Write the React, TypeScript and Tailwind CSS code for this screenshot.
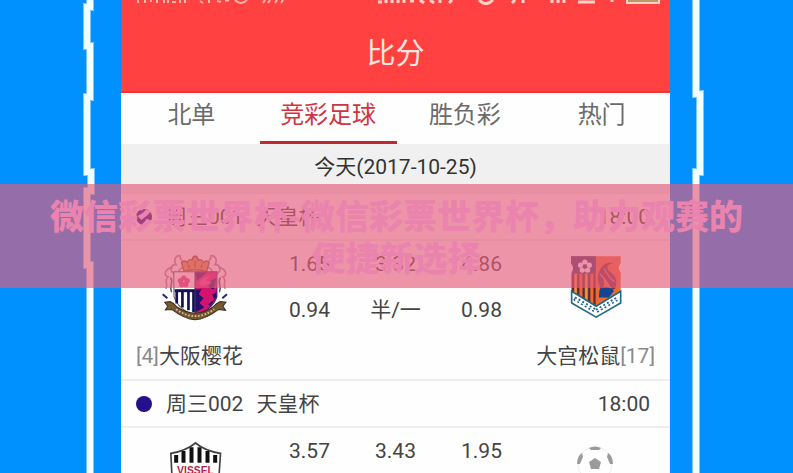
import React from "react";
import clsx from "clsx";

interface Team {
  name?: string;
  rank?: string;
  crest: React.ReactNode;
}

interface Match {
  code: string;
  league: string;
  time: string;
  odds: string[];
  handicap?: string[];
  home: Team;
  away: Team;
}

const SakuraCrest = () => (
  <svg viewBox="40 40 200 200" className="h-[67px] w-[67px]" aria-hidden="true">
    <g fill="none" stroke="#a98a96" strokeWidth="5" strokeLinecap="round">
      <path d="M76 100 C60 88 68 70 82 72 C72 56 84 42 94 46 C90 56 106 58 104 74 C104 84 92 80 90 92" />
      <path d="M204 100 C220 88 212 70 198 72 C208 56 196 42 186 46 C190 56 174 58 176 74 C176 84 188 80 190 92" />
      <path d="M70 80 C48 84 44 106 58 108 C44 120 60 132 52 142 M210 80 C232 84 236 106 222 108 C236 120 220 132 228 142" />
      <path d="M66 112 C76 124 60 134 68 152 M214 112 C204 124 220 134 212 152" stroke="#6d5a72" />
    </g>
    <path
      d="M106 92 L98 66 Q108 56 116 66 Q118 54 130 58 Q131 48 139 46 Q147 48 148 58 Q160 54 163 66 Q172 56 181 66 L173 92 Q140 82 106 92Z"
      fill="#d8953c"
      stroke="#8c5426"
      strokeWidth="4"
    />
    <path d="M118 72 L122 82 M139 60 V80 M160 72 L156 82" stroke="#8c5426" strokeWidth="4" />
    <path d="M75 93 H139 V222 Q90 208 76 168Z" fill="#fff" stroke="#555" strokeWidth="3" />
    <path d="M139 93 H204 V168 Q190 208 139 222Z" fill="#d3146f" stroke="#41246b" strokeWidth="3" />
    <g fill="#d8457f">
      <circle cx="105" cy="112" r="8" />
      <circle cx="95" cy="120" r="8" />
      <circle cx="115" cy="120" r="8" />
      <circle cx="99" cy="131" r="8" />
      <circle cx="111" cy="131" r="8" />
    </g>
    <path d="M78 145 H138 V154 H78Z" fill="#141450" />
    <path d="M84 150 V188 M101 150 V200 M119 150 V208 M134 150 V214" stroke="#141450" strokeWidth="8" />
    <path d="M140 95 H174 L144 120Z M202 112 L194 146 L178 138 L186 120Z M140 146 L158 144 L150 160 L164 172 L152 186 L166 200 L140 214Z M202 154 L190 162 L196 176 L178 190 L184 196 L203 168Z" fill="#24106d" />
    <path d="M150 126 Q166 102 184 106 L170 120 L190 126 L160 136Z" fill="#ee398e" />
    <path
      d="M48 184 L64 182 Q78 188 86 199 Q112 216 139 217 Q166 216 191 199 Q200 188 214 182 L231 184 L222 196 L230 208 L208 206 Q170 235 139 236 Q108 235 70 206 L50 207 L57 196Z"
      fill="#75582f"
      stroke="#3b2c25"
      strokeWidth="3"
    />
    <path d="M82 205 Q139 246 196 205" fill="none" stroke="#d9c38c" strokeWidth="5" strokeDasharray="5 5" />
    <path d="M42 160 L56 172 M234 160 L220 172" stroke="#29266f" strokeWidth="6" />
  </svg>
);

const SquirrelCrest = () => (
  <svg viewBox="70 42 160 192" className="h-[64px] w-[53px]" aria-hidden="true">
    <path d="M76 45 H226 V66 Q214 78 226 94 V186 L152 230 L77 186 V94 Q88 78 76 66Z" fill="#ed6b33" />
    <path d="M76 45 H151 V98 H78 Q88 80 76 66Z" fill="#3f3b70" />
    <path d="M82 98 V164 M98 98 V172 M114 98 V178 M131 98 V188 M147 98 V200" stroke="#5e2b3b" strokeWidth="7" />
    <path d="M90 98 V164 M122 98 V178" stroke="#e9a035" strokeWidth="5" />
    <path
      d="M160 128 C150 94 172 58 204 66 C184 68 180 82 194 92 C210 104 218 116 210 142 L190 154 C198 134 184 118 172 110 C178 128 178 142 166 150Z"
      fill="#73334a"
    />
    <path d="M176 82 Q192 112 208 122 M164 98 Q180 116 196 142" stroke="#e57550" strokeWidth="4" fill="none" />
    <path d="M162 146 Q184 128 206 150 L190 170 H160Z" fill="#12478f" />
    <g fill="#fff">
      <circle cx="118" cy="63" r="8" />
      <circle cx="105" cy="72" r="8" />
      <circle cx="131" cy="72" r="8" />
      <circle cx="110" cy="87" r="8" />
      <circle cx="126" cy="87" r="8" />
    </g>
    <circle cx="118" cy="76" r="7" fill="#4c4168" />
    <path d="M78 151 L152 196 L226 151 V186 L152 229 L78 186Z" fill="#fff" stroke="#216a83" strokeWidth="5" />
    <path d="M86 172 L152 211 L218 172" fill="none" stroke="#23678b" strokeWidth="13" strokeDasharray="6 7" />
    <path d="M88 174 L152 211 L216 174" fill="none" stroke="#fff" strokeWidth="3" />
  </svg>
);

const VisselCrest = () => (
  <svg viewBox="270 335 158 192" className="h-[64px] w-[53px]" aria-hidden="true">
    <path d="M275 369 Q320 362 349 338 Q378 362 424 369 L420 430 Q412 490 349 523 Q286 490 278 430Z" fill="#fff" stroke="#444" strokeWidth="5" />
    <path d="M291 374 V397 M313 362 V397 M337 351 V397 M361 351 V397 M385 362 V397 M408 374 V397" stroke="#111" strokeWidth="12" />
    <text
      x="349"
      y="430"
      textAnchor="middle"
      className="fill-[#b91f4b] font-['Liberation_Sans',sans-serif] text-[31px] font-bold"
    >
      VISSEL
    </text>
  </svg>
);

const BallCrest = () => (
  <svg viewBox="0 0 53 64" className="h-[64px] w-[53px]" aria-hidden="true">
    <circle cx="26" cy="22" r="17" fill="#fff" stroke="#ececec" />
    <g fill="#9b9b9b">
      <path d="M26 16 L32 20 L30 27 H22 L20 20Z" />
      <path d="M20 6 Q26 3 32 6 L30 8 H22Z" />
      <path d="M8 22 Q8 14 13 11 L14 15 L11 22Z" />
      <path d="M44 22 Q44 14 39 11 L38 15 L41 22Z" />
      <path d="M13 32 L18 34 L20 38 Q16 37 13 32Z" />
      <path d="M39 32 L34 34 L32 38 Q36 37 39 32Z" />
    </g>
  </svg>
);

const tabs = ["北单", "竞彩足球", "胜负彩", "热门"];

const matches: Match[] = [
  {
    code: "周三001",
    league: "天皇杯",
    time: "18:00",
    odds: ["1.65", "3.32", "4.86"],
    handicap: ["0.94", "半/一", "0.98"],
    home: { name: "大阪樱花", rank: "[4]", crest: <SakuraCrest /> },
    away: { name: "大宫松鼠", rank: "[17]", crest: <SquirrelCrest /> },
  },
  {
    code: "周三002",
    league: "天皇杯",
    time: "18:00",
    odds: ["3.57", "3.43", "1.95"],
    home: { crest: <VisselCrest /> },
    away: { crest: <BallCrest /> },
  },
];

const Bezel = ({ d }: { d: string }) => (
  <svg viewBox="0 0 24 473" className="h-[473px] w-6 shrink-0" aria-hidden="true">
    <path d={d} fill="none" stroke="#7cc8ff" strokeWidth="8" />
    <path d={d} fill="none" stroke="#f0ffff" strokeWidth="6" />
  </svg>
);

const StatusBar = () => (
  <div className="flex h-[5px] justify-between pl-4 pr-[10px]" aria-hidden="true">
    <svg viewBox="0 0 148 5" className="h-[5px] w-[148px]">
      <path
        d="M1 0V3 M8 0V3 M14 0V2 M20 0V3 M27 0V3 M31 0V3 M35 2H39 M43 0V3 M48 0V3 M63 1L66 3 M72 0V3 M80 1L84 2 M88 1L92 0 M98 0Q104 6 110 0 M128 0L126 3 M133 0L131 3 M140 0L138 3 M146 0L144 3"
        fill="none"
        stroke="#ffb5a8"
        strokeWidth="2"
      />
    </svg>
    <svg viewBox="0 0 284 5" className="h-[5px] w-[284px]">
      <path
        d="M2 2H6 M10 0V3 M16 0V3 M22 0V3 M28 0V3 M34 1H38 M44 0L48 3 M54 0L58 3 M64 0V3 M76 0L73 3 M103 0Q110 7 117 0 M139 0L136 3 M147 0V3 M176 0V3 M182 0V3 M188 0V3 M202 2H219 M236 0V2"
        fill="none"
        stroke="#ffd3ca"
        strokeWidth="3"
      />
      <rect x="251" y="-4" width="32" height="7" fill="#b79a68" stroke="#ffd3ca" strokeWidth="2" />
    </svg>
  </div>
);

const MatchCard = ({ match }: { match: Match }) => (
  <article>
    <header className="flex h-[47px] items-center border-t-2 border-[#eeeeee] pl-[15px] pr-5">
      <span className="mr-[14px] h-4 w-4 rounded-full bg-[#23108a]" />
      <span>{match.code}</span>
      <span className="ml-[13px]">{match.league}</span>
      <time className="ml-auto">{match.time}</time>
    </header>
    <div className="grid grid-cols-[1fr_86px_86px_86px_1fr] grid-rows-[46px_46px] items-center border-t-2 border-[#eeeeee] text-center">
      <div className="row-span-2 flex justify-center pl-1">{match.home.crest}</div>
      {match.odds.map((odd) => (
        <span key={odd}>{odd}</span>
      ))}
      <div className="col-start-5 row-span-2 row-start-1 flex justify-center pr-1">{match.away.crest}</div>
      {match.handicap?.map((value) => (
        <span key={value}>{value}</span>
      ))}
    </div>
    {match.home.name && (
      <div className="flex h-[46px] items-center justify-between px-[15px]">
        <span>
          <span className="text-[#8a8a8a]">{match.home.rank}</span>
          {match.home.name}
        </span>
        <span>
          {match.away.name}
          <span className="text-[#8a8a8a]">{match.away.rank}</span>
        </span>
      </div>
    )}
  </article>
);

export default function App() {
  return (
    <main className="relative flex h-screen overflow-hidden bg-[#0091ff] font-[Roboto,'Noto_Sans_CJK_SC',sans-serif] text-[21px] leading-7 text-[#444444]">
      <div className="flex w-[121px] shrink-0 justify-end pr-[21px]">
        <Bezel d="M14 -2 V7 H11 V46 H14 V97 H11 V172 H15 V191 H11 V265 H14 V475" />
      </div>

      <section className="min-w-0 flex-1 bg-[#fefefe]">
        <header className="h-[93px] border-b-2 border-[#ee3736] bg-[#ff4142]">
          <StatusBar />
          <h2 className="pt-[29px] text-center text-[29px] leading-10 text-[#ffe6de]">比分</h2>
        </header>

        <nav className="grid h-[51px] grid-cols-4 pl-0.5">
          {tabs.map((tab, i) => (
            <button
              key={tab}
              type="button"
              className={clsx(
                "border-b-[3px] pb-1 text-2xl",
                i === 1 ? "border-[#be2a30] text-[#d0353f]" : "border-transparent text-[#6b6b6b]",
              )}
            >
              {tab}
            </button>
          ))}
        </nav>

        <div className="h-12 bg-[#f0f0f0] pt-[9px] text-center text-[#333333]">今天(2017-10-25)</div>

        {matches.map((match) => (
          <MatchCard key={match.code} match={match} />
        ))}
      </section>

      <div className="flex w-[123px] shrink-0 pl-4">
        <Bezel d="M10 -2 V94 H14 V172 H10 V475" />
      </div>

      <div className="absolute inset-x-0 top-[184px] bg-[#e55a7a]/65 px-10 py-[10px]">
        <h1 className="text-center font-['Noto_Sans_CJK_SC',sans-serif] text-[34px] font-black leading-[42px] text-[#ea84ae]">
          微信彩票世界杯-微信彩票世界杯，助力观赛的便捷新选择
        </h1>
      </div>
    </main>
  );
}
